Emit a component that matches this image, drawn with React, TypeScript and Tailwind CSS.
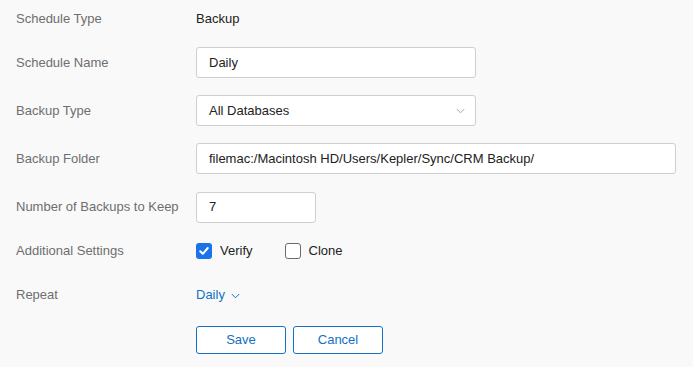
import React from "react";

const Label = ({ children }: { children: React.ReactNode }) => (
  <div className="w-[196px] shrink-0 pl-4 text-[13px] text-[#6e6e6e] whitespace-nowrap">{children}</div>
);

const Chevron = ({ className }: { className: string }) => (
  <svg width="9" height="6" viewBox="0 0 9 6" className={className} fill="none">
    <path d="M0.75 1L4.5 4.75L8.25 1" stroke="currentColor" strokeWidth="1" />
  </svg>
);

export default function App() {
  return (
    <div
      className="w-[693px] h-[367px] bg-[#f9f9f9] text-[13px]"
      style={{ fontFamily: '"Liberation Sans", Arial, sans-serif' }}
    >
      <div className="flex items-center h-[38px]">
        <Label>Schedule Type</Label>
        <div className="text-[#222]">Backup</div>
      </div>
      <div className="flex items-center h-[49px]">
        <Label>Schedule Name</Label>
        <div className="w-[280px] h-[31px] bg-white border border-[#cfcfcf] rounded-[3px] flex items-center px-3 text-[#222]">
          Daily
        </div>
      </div>
      <div className="flex items-center h-[47px]">
        <Label>Backup Type</Label>
        <div className="w-[280px] h-[31px] bg-white border border-[#cfcfcf] rounded-[3px] flex items-center justify-between pl-3 pr-[10px] text-[#222]">
          <span>All Databases</span>
          <Chevron className="text-[#a8a8a8] mt-[1px]" />
        </div>
      </div>
      <div className="flex items-center h-[49px]">
        <Label>Backup Folder</Label>
        <div className="w-[480px] h-[31px] bg-white border border-[#cfcfcf] rounded-[3px] flex items-center px-3 text-[#222]">
          filemac:/Macintosh HD/Users/Kepler/Sync/CRM Backup/
        </div>
      </div>
      <div className="flex items-center h-[48px]">
        <Label>Number of Backups to Keep</Label>
        <div className="w-[120px] h-[31px] bg-white border border-[#cfcfcf] rounded-[3px] flex items-center px-3 text-[#222]">
          7
        </div>
      </div>
      <div className="flex items-center h-[39px]">
        <Label>Additional Settings</Label>
        <div className="flex items-center">
          <div className="w-4 h-4 rounded-[3px] bg-[#1a73e8] flex items-center justify-center">
            <svg width="12" height="12" viewBox="0 0 12 12" fill="none">
              <path d="M2.2 6.3L4.8 8.8L9.8 3" stroke="white" strokeWidth="2" strokeLinecap="round" strokeLinejoin="round" />
            </svg>
          </div>
          <span className="ml-2 text-[#222]">Verify</span>
          <div className="ml-[32px] w-4 h-4 rounded-[3px] bg-white border border-[#6b6b6b]" />
          <span className="ml-2 text-[#222]">Clone</span>
        </div>
      </div>
      <div className="flex items-center h-[50px]">
        <Label>Repeat</Label>
        <div className="flex items-center text-[#1470c4]">
          <span>Daily</span>
          <Chevron className="ml-[6px] mt-[2px]" />
        </div>
      </div>
      <div className="flex items-center h-[40px]">
        <div className="w-[196px] shrink-0" />
        <button className="w-[90px] h-[28px] bg-white border border-[#1470c4] rounded-[3px] text-[#1470c4] text-[13px]">
          Save
        </button>
        <button className="ml-[7px] w-[90px] h-[28px] bg-white border border-[#1470c4] rounded-[3px] text-[#1470c4] text-[13px]">
          Cancel
        </button>
      </div>
    </div>
  );
}
